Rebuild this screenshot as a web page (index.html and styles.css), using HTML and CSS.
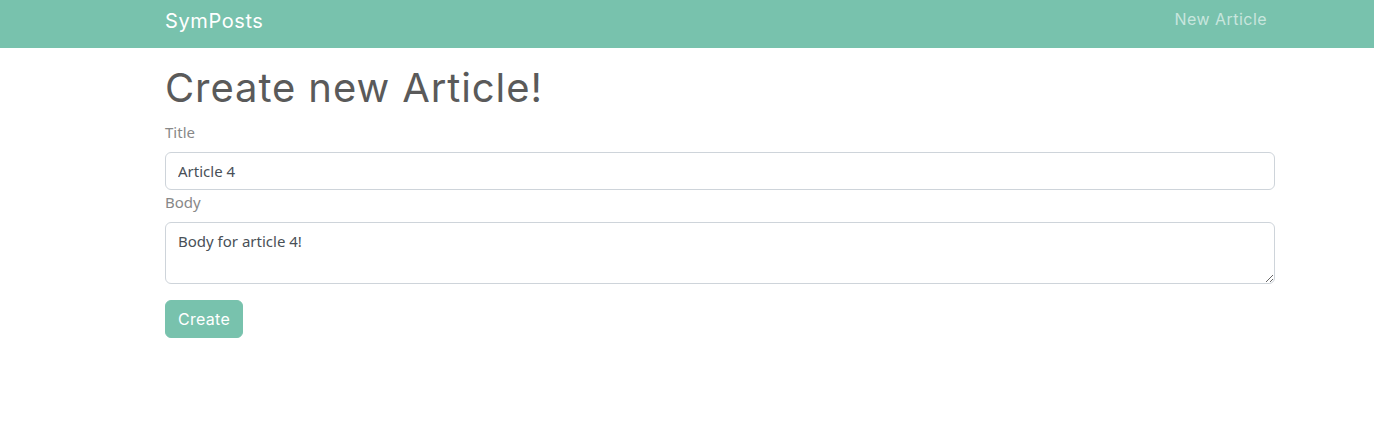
FILE: index.html
```html
<!DOCTYPE html>
<html lang="en">
<head>
<meta charset="utf-8">
<title>SymPosts</title>
<link rel="stylesheet" href="styles.css">
</head>
<body>
<nav class="navbar">
  <div class="container nav-inner">
    <a class="brand" href="#">SymPosts</a>
    <a class="nav-link" href="#">New Article</a>
  </div>
</nav>
<main class="container main">
  <h1 class="page-title">Create new Article!</h1>
  <form class="form">
    <label class="label" for="title">Title</label>
    <input class="control" id="title" type="text" value="Article 4">
    <label class="label" for="body">Body</label>
    <textarea class="control textarea" id="body" rows="2">Body for article 4!</textarea>
    <button class="btn" type="button">Create</button>
  </form>
</main>
</body>
</html>
```

FILE: styles.css
```css
* { box-sizing: border-box; }
html, body { margin: 0; padding: 0; }
body {
  font-family: "Noto Sans", "Open Sans", sans-serif;
  font-size: 15px;
  line-height: 1.5;
  color: #888888;
  background: #ffffff;
}
.container {
  width: 1110px;
  margin-left: 165px;
}
.navbar {
  background: #78c2ad;
  height: 48px;
}
.nav-inner {
  display: flex;
  align-items: center;
  justify-content: space-between;
  height: 48px;
}
.brand {
  font-family: "Inter", "Lato", sans-serif;
  font-size: 20px;
  letter-spacing: 0.6px;
  color: #ffffff;
  text-decoration: none;
  line-height: 30px;
  margin-top: -7px;
}
.nav-link {
  font-family: "Inter", "Lato", sans-serif;
  font-size: 16px;
  letter-spacing: 0.45px;
  color: rgba(255, 255, 255, 0.6);
  text-decoration: none;
  padding: 0 8px;
  margin-top: -10px;
}
.main {
  padding-top: 16px;
}
.page-title {
  font-family: "Inter", "Lato", sans-serif;
  font-weight: 400;
  font-size: 40px;
  letter-spacing: 0.9px;
  line-height: 48px;
  color: #5a5a5a;
  margin: 0 0 8px 0;
}
.form {
  display: flex;
  flex-direction: column;
  align-items: flex-start;
}
.label {
  display: block;
  margin-bottom: 8px;
  line-height: 24px;
}
.control {
  display: block;
  width: 100%;
  height: 38px;
  padding: 6px 12px;
  font-family: "Noto Sans", "Open Sans", sans-serif;
  font-size: 15px;
  line-height: 24px;
  color: #495057;
  background: #ffffff;
  border: 1px solid #ced4da;
  border-radius: 6px;
  outline: none;
}
.textarea {
  height: 62px;
  resize: vertical;
}
.btn {
  margin-top: 16px;
  height: 38px;
  padding: 6px 12px;
  font-family: "Inter", "Lato", sans-serif;
  font-size: 16px;
  letter-spacing: 0.3px;
  line-height: 24px;
  color: #ffffff;
  background: #78c2ad;
  border: 1px solid #78c2ad;
  border-radius: 6px;
}
```
